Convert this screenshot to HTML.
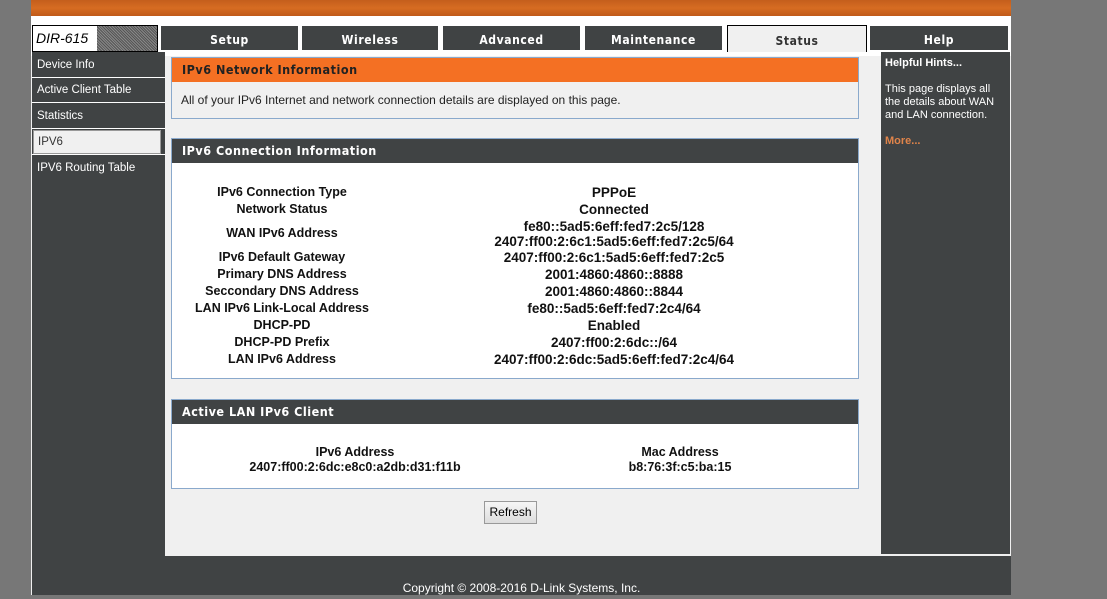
<!DOCTYPE html><html><head><style>
*{margin:0;padding:0;box-sizing:border-box}
body{width:1107px;height:599px;background:#777;position:relative;overflow:hidden;font-family:"Liberation Sans","DejaVu Sans",sans-serif;font-size:12px}
.a{position:absolute}
.tab{position:absolute;top:26px;height:24px;background:#404344;color:#fff;font-weight:bold;text-align:center;line-height:28px;letter-spacing:.6px;font-family:"DejaVu Sans Condensed","DejaVu Sans",sans-serif;font-size:12px}
.nav{position:absolute;left:32px;width:133px;height:25px;color:#fff;font-size:11.5px;line-height:24px;padding-left:5px;border-bottom:1px solid #fff;background:#404344}
.box{position:absolute;left:171px;width:688px;border:1px solid #8aa9cc;background:#fff}
.hd{height:24px;background:#404344;color:#fff;font-weight:bold;line-height:24px;padding-left:10px;letter-spacing:.5px;font-family:"DejaVu Sans Condensed","DejaVu Sans",sans-serif;font-size:12.5px}
.r{position:absolute;font-weight:bold;text-align:center;color:#111;line-height:15px}
.l{left:171px;width:222px;font-size:12.5px}.v{left:414px;width:400px;font-size:13.5px}
</style></head><body>
<div class="a" style="left:31px;top:0;width:980px;height:599px;background:#f0f0f0"></div>
<div class="a" style="left:31px;top:0;width:980px;height:16px;background:linear-gradient(#c45e1c,#d66c22 50%,#c05a1a)"></div>
<div class="a" style="left:31px;top:16px;width:980px;height:7px;background:#fff"></div>
<div class="a" style="left:31px;top:23px;width:980px;height:33px;background:#fff"></div>
<div class="a" style="left:32px;top:25px;width:126px;height:27px;border:1px solid #000;background:repeating-linear-gradient(45deg,#555 0 1px,#888 1px 2px)"></div>
<div class="a" style="left:33px;top:26px;width:64px;height:25px;background:#fff;font-style:italic;font-size:14px;line-height:25px;padding-left:3px">DIR-615</div>
<div class="tab" style="left:161px;width:137px">Setup</div>
<div class="tab" style="left:302px;width:136px">Wireless</div>
<div class="tab" style="left:443px;width:137px">Advanced</div>
<div class="tab" style="left:585px;width:137px">Maintenance</div>
<div class="tab" style="left:727px;top:25px;height:27px;width:140px;background:#f0f0f0;color:#333;border:1px solid #000;border-bottom:none;line-height:30px">Status</div>
<div class="tab" style="left:870px;width:138px">Help</div>
<div class="a" style="left:32px;top:52px;width:133px;height:504px;background:#404344"></div>
<div class="nav" style="top:52px;height:26px;line-height:26px">Device Info</div>
<div class="nav" style="top:78px">Active Client Table</div>
<div class="nav" style="top:104px">Statistics</div>
<div class="nav" style="top:130px;background:#404344"><div style="position:absolute;left:1px;top:0;width:128px;height:24px;background:#f0f0f0;border:1px solid #999;color:#333;padding-left:4px;line-height:22px">IPV6</div></div>
<div class="nav" style="top:156px;border-bottom:none">IPV6 Routing Table</div>
<div class="a" style="left:881px;top:52px;width:129px;height:502px;background:#404344;color:#fff;font-size:11px;padding:5px 4px;line-height:13px">
<b>Helpful Hints...</b><br><br>This page displays all the details about WAN and LAN connection.<br><br><b style="color:#e0844a">More...</b></div>
<div class="box" style="top:57px;height:62px;background:#f0f0f0"><div class="hd" style="background:#f47023;color:#222;height:24px">IPv6 Network Information</div><div style="padding:11px 9px;font-size:12px;color:#222">All of your IPv6 Internet and network connection details are displayed on this page.</div></div>
<div class="box" style="top:138px;height:241px"><div class="hd">IPv6 Connection Information</div></div>
<div class="r l" style="top:185px">IPv6 Connection Type</div><div class="r v" style="top:185px">PPPoE</div>
<div class="r l" style="top:202px">Network Status</div><div class="r v" style="top:202px">Connected</div>
<div class="r l" style="top:226px">WAN IPv6 Address</div><div class="r v" style="top:219px">fe80::5ad5:6eff:fed7:2c5/128<br>2407:ff00:2:6c1:5ad5:6eff:fed7:2c5/64</div>
<div class="r l" style="top:250px">IPv6 Default Gateway</div><div class="r v" style="top:250px">2407:ff00:2:6c1:5ad5:6eff:fed7:2c5</div>
<div class="r l" style="top:267px">Primary DNS Address</div><div class="r v" style="top:267px">2001:4860:4860::8888</div>
<div class="r l" style="top:284px">Seccondary DNS Address</div><div class="r v" style="top:284px">2001:4860:4860::8844</div>
<div class="r l" style="top:301px">LAN IPv6 Link-Local Address</div><div class="r v" style="top:301px">fe80::5ad5:6eff:fed7:2c4/64</div>
<div class="r l" style="top:318px">DHCP-PD</div><div class="r v" style="top:318px">Enabled</div>
<div class="r l" style="top:335px">DHCP-PD Prefix</div><div class="r v" style="top:335px">2407:ff00:2:6dc::/64</div>
<div class="r l" style="top:352px">LAN IPv6 Address</div><div class="r v" style="top:352px">2407:ff00:2:6dc:5ad5:6eff:fed7:2c4/64</div>
<div class="box" style="top:399px;height:90px"><div class="hd">Active LAN IPv6 Client</div></div>
<div class="r" style="left:205px;width:300px;top:445px;font-size:12.5px">IPv6 Address<br>2407:ff00:2:6dc:e8c0:a2db:d31:f11b</div>
<div class="r" style="left:530px;width:300px;top:445px;font-size:12.5px">Mac Address<br>b8:76:3f:c5:ba:15</div>
<div class="a" style="left:484px;top:501px;width:53px;height:23px;border:1px solid #999;background:linear-gradient(#f6f6f6,#ddd);font-size:12px;text-align:center;line-height:21px">Refresh</div>
<div class="a" style="left:32px;top:556px;width:979px;height:39px;background:#404344;color:#fff;text-align:center;font-size:12px;padding-top:25px">Copyright © 2008-2016 D-Link Systems, Inc.</div>
<div class="a" style="left:0;top:595px;width:1107px;height:4px;background:#777"></div>
</body></html>
